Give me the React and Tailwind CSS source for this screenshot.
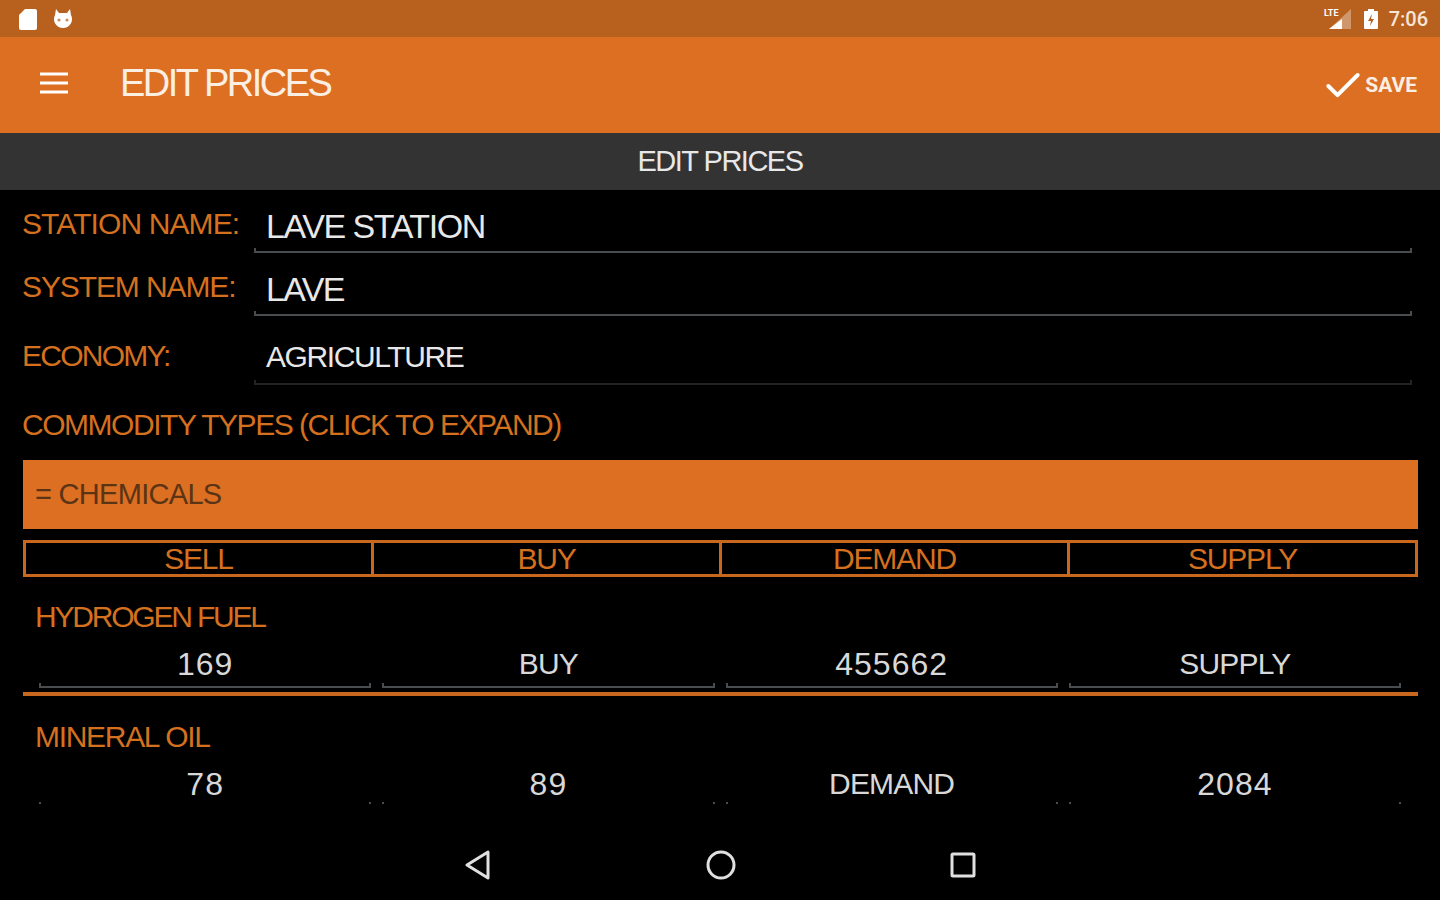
import { Check } from 'lucide-react'

const ORANGE = 'text-[#d5701f]'

function Underline({ className = '' }) {
  return (
    <div className={`h-[5px] border-b-2 border-x-2 border-[#4a4d4f] ${className}`} />
  )
}

function FormRow({ label, value, className, labelClass = 'tracking-[-0.9px]', valueClass = 'text-[34px] leading-[38px]', lineClass = 'border-[#4a4d4f]' }) {
  return (
    <div className={`flex items-start ${className}`}>
      <div className={`w-[232px] shrink-0 text-[30px] leading-[34px] ${ORANGE} ${labelClass}`}>{label}</div>
      <div className="flex-1 flex flex-col">
        <div className={`pl-3 text-[#e8e8e8] ${valueClass}`}>{value}</div>
        <div className={`mt-[3px] h-[5px] border-b-2 border-x-2 ${lineClass}`} />
      </div>
    </div>
  )
}

function HeadCell({ children, last }) {
  return (
    <div className={`flex-1 text-center text-[30px] leading-[31px] tracking-[-1.2px] ${ORANGE} ${last ? '' : 'border-r-[3px] border-[#c8681e]'}`}>
      {children}
    </div>
  )
}

function Commodity({ name, nameClass, values, faded, className }) {
  return (
    <div className={className}>
      <div className={`pl-[13px] text-[30px] leading-[34px] ${ORANGE} ${nameClass}`}>{name}</div>
      <div className="flex gap-[11px] pl-[17px] pr-[17px] mt-[12px]">
        {values.map((v, i) => (
          <div key={i} className="flex-1 flex flex-col">
            <div className={`text-center leading-[36px] text-[#d8d8d8] ${/^\d+$/.test(v) ? 'text-[32px] tracking-[1px]' : 'text-[30px] tracking-[-0.8px]'}`}>{v}</div>
            {faded ? (
              <div className="flex justify-between">
                <span className="w-[2px] h-[2px] bg-[#4a4d4f]" />
                <span className="w-[2px] h-[2px] bg-[#4a4d4f]" />
              </div>
            ) : (
              <Underline className="mt-[1px]" />
            )}
          </div>
        ))}
      </div>
    </div>
  )
}

export default function App() {
  return (
    <div className="w-[1440px] h-[900px] overflow-hidden bg-black flex flex-col font-['Liberation_Sans',sans-serif]">
      {/* status bar */}
      <div className="h-[37px] bg-[#b8601e] flex items-center justify-between pl-[18px] pr-[12px] shrink-0">
        <div className="flex items-center gap-[15px]">
          <svg width="20" height="22" viewBox="0 0 20 22">
            <path d="M7 1h10a2 2 0 0 1 2 2v17a2 2 0 0 1-2 2H3a2 2 0 0 1-2-2V7z" fill="#fff" />
          </svg>
          <svg width="20" height="22" viewBox="0 0 20 22">
            <path d="M3 1l3 4h8l3-4 1 6a9 9 0 1 1-16 0z" fill="#fff" />
            <circle cx="6" cy="12" r="1.6" fill="#c9905f" />
            <circle cx="14" cy="12" r="1.6" fill="#c9905f" />
          </svg>
        </div>
        <div className="flex items-center">
          <svg width="30" height="24" viewBox="0 0 30 24">
            <path d="M28 2v20H6z" fill="#fff" fillOpacity=".35" />
            <path d="M19 12v10H6z" fill="#fff" />
            <text x="1" y="9" fontSize="9" fontWeight="700" fill="#fff" fontFamily="Roboto, sans-serif">LTE</text>
          </svg>
          <svg className="ml-[10px]" width="16" height="22" viewBox="0 0 16 22">
            <path d="M5 1h6v2h3a1 1 0 0 1 1 1v16a1 1 0 0 1-1 1H2a1 1 0 0 1-1-1V4a1 1 0 0 1 1-1h3z" fill="#fff" />
            <path d="M9 6l-4 7h3l-1 5 4-7H8z" fill="#b8601e" />
          </svg>
          <span className="ml-[10px] text-[20px] leading-none font-medium text-[#f5e6da] font-['Roboto',sans-serif]">7:06</span>
        </div>
      </div>

      {/* toolbar */}
      <div className="h-[96px] bg-[#dc6f22] flex items-center shrink-0 pb-[4px]">
        <svg className="ml-[40px]" width="28" height="22" viewBox="0 0 28 22" stroke="#fff" strokeWidth="3">
          <path d="M0 2h28M0 11h28M0 20h28" />
        </svg>
        <div className="ml-[52px] text-[38px] leading-none tracking-[-2.5px] text-[#fbeee3]">EDIT PRICES</div>
        <div className="ml-auto mr-[23px] mt-[6px] flex items-center">
          <Check className="text-white -ml-[3px]" size={44} strokeWidth={4} absoluteStrokeWidth />
          <span className="text-[21px] font-bold font-['Roboto',sans-serif] text-[#fbeee3]">SAVE</span>
        </div>
      </div>

      {/* sub header */}
      <div className="h-[57px] bg-[#333333] flex items-center justify-center shrink-0 text-[29px] tracking-[-1.5px] text-[#e8e8e8]">
        EDIT PRICES
      </div>

      {/* form */}
      <div className="pl-[22px] pr-[22px] flex-1 flex flex-col overflow-hidden">
        <div className="pr-[6px]">
          <FormRow label="STATION NAME:" value="LAVE STATION" className="mt-[17px]" valueClass="text-[34px] leading-[38px] tracking-[-1.45px]" />
          <FormRow label="SYSTEM NAME:" value="LAVE" className="mt-[17px]" valueClass="text-[34px] leading-[38px] tracking-[-1.7px]" labelClass="tracking-[-1.1px]" />
          <FormRow label="ECONOMY:" value="AGRICULTURE" className="mt-[23px]" labelClass="tracking-[-1.75px]" valueClass="text-[30px] leading-[36px] pb-[2px] tracking-[-1.4px]" lineClass="border-[#222426]" />
        </div>
        <div className={`mt-[23px] text-[30px] leading-[34px] tracking-[-1.47px] ${ORANGE}`}>COMMODITY TYPES (CLICK TO EXPAND)</div>
        <div className="mt-[18px] ml-[1px] h-[69px] bg-[#dc6f22] pl-[12px] flex items-center text-[29px] tracking-[-0.7px] text-[#5b3415]">
          = CHEMICALS
        </div>
        <div className="mt-[11px] ml-[1px] h-[37px] flex border-[3px] border-[#c8681e]">
          <HeadCell>SELL</HeadCell>
          <HeadCell>BUY</HeadCell>
          <HeadCell>DEMAND</HeadCell>
          <HeadCell last>SUPPLY</HeadCell>
        </div>
        <Commodity name="HYDROGEN FUEL" nameClass="tracking-[-2.2px]" values={['169', 'BUY', '455662', 'SUPPLY']} className="mt-[23px]" />
        <div className="mt-[4px] ml-[1px] h-[4px] bg-[#c8681e]" />
        <Commodity name="MINERAL OIL" nameClass="tracking-[-1.3px]" values={['78', '89', 'DEMAND', '2084']} faded className="mt-[24px]" />
      </div>

      {/* nav bar */}
      <div className="h-[70px] shrink-0 flex items-center justify-center gap-[214px] pb-[1px] -mt-[1px]">
        <svg width="28" height="30" viewBox="0 0 28 30" fill="none" stroke="#e0e0e0" strokeWidth="3" strokeLinejoin="round">
          <path d="M24 2v26L3 15z" />
        </svg>
        <svg width="30" height="30" viewBox="0 0 30 30" fill="none" stroke="#e0e0e0" strokeWidth="3">
          <circle cx="15" cy="15" r="13" />
        </svg>
        <svg width="26" height="26" viewBox="0 0 26 26" fill="none" stroke="#e0e0e0" strokeWidth="3" strokeLinejoin="round">
          <rect x="2" y="2" width="22" height="22" rx="1" />
        </svg>
      </div>
    </div>
  )
}
